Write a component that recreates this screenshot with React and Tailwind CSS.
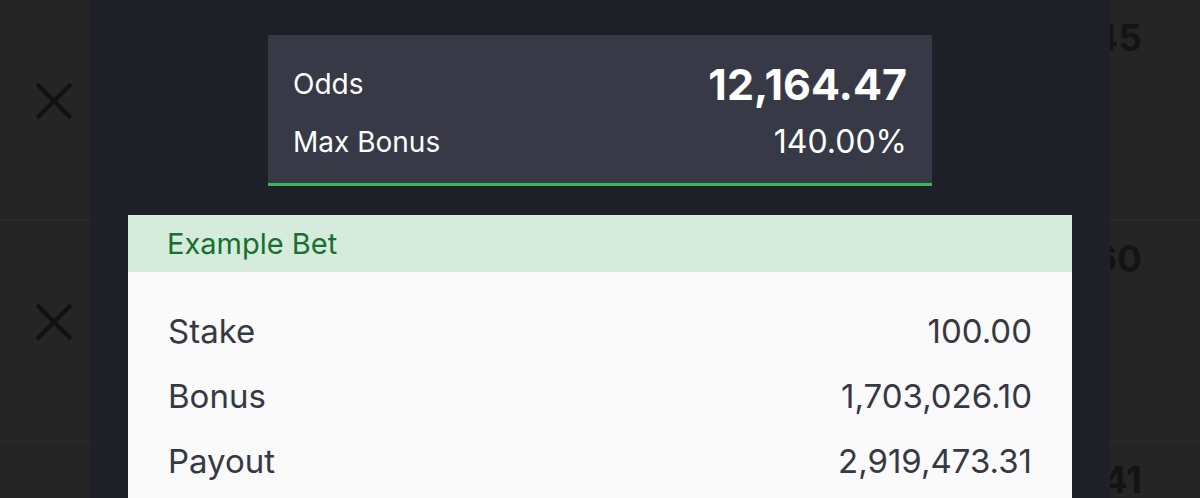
const rows = [
  { value: "1.45" },
  { value: "2.60" },
  { value: "3.41" },
];

const example = [
  { label: "Stake", value: "100.00" },
  { label: "Bonus", value: "1,703,026.10" },
  { label: "Payout", value: "2,919,473.31" },
];

function CloseMark() {
  return (
    <svg width="38" height="38" viewBox="0 0 38 38" className="text-[#111]">
      <path d="M2 2 L36 36 M36 2 L2 36" stroke="currentColor" strokeWidth="4" fill="none" />
    </svg>
  );
}

export default function App() {
  return (
    <div
      className="relative w-[1200px] h-[498px] overflow-hidden bg-[#252525]"
      style={{ fontFamily: "Inter, 'Noto Sans', sans-serif" }}
    >
      {/* list behind the sheet */}
      <div className="flex flex-col">
        {rows.map((row, i) => (
          <div key={i} className="relative h-[221px] shrink-0 border-b border-[#2c2c2c]">
            <div className="absolute left-[35px] top-[82px]">
              <CloseMark />
            </div>
            <span className="absolute right-[58px] top-[19px] text-[37px] font-bold leading-none text-[#141414]">
              {row.value}
            </span>
          </div>
        ))}
      </div>

      {/* bonus sheet */}
      <div className="absolute inset-y-0 left-[90px] right-[90px] bg-[#1e2028] flex flex-col items-center pt-[35px]">
        <div className="w-[664px] bg-[#373a46] border-b-[3px] border-[#3cb55a] px-[25px] pt-[24px] pb-[16px] flex flex-col gap-[8px] text-white">
          <div className="h-[50px] flex items-center justify-between">
            <span className="text-[28px] leading-none">Odds</span>
            <span className="text-[43px] font-bold leading-none">12,164.47</span>
          </div>
          <div className="h-[50px] flex items-center justify-between">
            <span className="text-[28px] leading-none">Max Bonus</span>
            <span className="text-[32px] leading-none">140.00%</span>
          </div>
        </div>

        <div className="mt-[29px] w-[944px] flex-1 bg-[#fafafa]">
          <div className="h-[57px] bg-[#d5ebdb] flex items-center pl-[39px]">
            <span className="text-[29px] leading-none text-[#17702f]">Example Bet</span>
          </div>
          <div className="pt-[27px] px-[40px] text-[#363943]">
            {example.map((item) => (
              <div key={item.label} className="h-[65px] flex items-center justify-between">
                <span className="text-[33px] leading-none">{item.label}</span>
                <span className="text-[33px] leading-none">{item.value}</span>
              </div>
            ))}
          </div>
        </div>
      </div>
    </div>
  );
}
